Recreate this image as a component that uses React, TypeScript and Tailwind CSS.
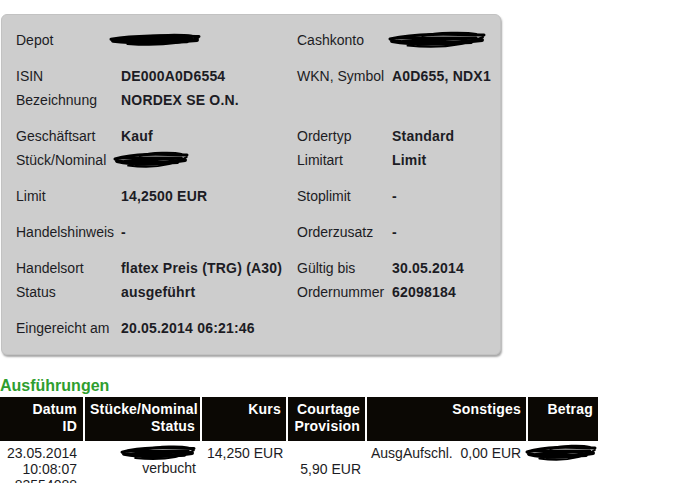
import type { ReactNode } from "react";

function Scribble({ w, h, className = "" }: { w: number; h: number; className?: string }) {
  return (
    <svg width={w} height={h} viewBox={`0 0 ${w} ${h}`} className={className}>
      <g fill="none" stroke="#000" strokeLinecap="round" strokeLinejoin="round">
        <path d={`M2 ${h * 0.45} C ${w * 0.3} ${h * 0.15}, ${w * 0.6} ${h * 0.2}, ${w - 2} ${h * 0.25}`} strokeWidth="3" />
        <path d={`M4 ${h * 0.55} C ${w * 0.35} ${h * 0.8}, ${w * 0.7} ${h * 0.65}, ${w - 4} ${h * 0.5}`} strokeWidth="4" />
        <path d={`M${w * 0.1} ${h * 0.4} L ${w * 0.9} ${h * 0.4} L ${w * 0.15} ${h * 0.58} L ${w * 0.85} ${h * 0.62} L ${w * 0.3} ${h * 0.72}`} strokeWidth="3" />
        <path d={`M${w * 0.2} ${h * 0.78} C ${w * 0.45} ${h * 0.9}, ${w * 0.75} ${h * 0.85}, ${w * 0.97} ${h * 0.35}`} strokeWidth="2" />
        <path d={`M${w * 0.35} ${h * 0.3} C ${w * 0.5} ${h * 0.1}, ${w * 0.8} ${h * 0.1}, ${w * 0.9} ${h * 0.2}`} strokeWidth="2" />
      </g>
    </svg>
  );
}

function Row({ label, value, label2, value2 }: { label: string; value: ReactNode; label2?: string; value2?: ReactNode }) {
  return (
    <div className="grid h-6 grid-cols-[105px_176px_95px_1fr] items-center">
      <span>{label}</span>
      <span className="font-bold tracking-[0.2px]">{value}</span>
      <span>{label2}</span>
      <span className="font-bold tracking-[0.2px]">{value2}</span>
    </div>
  );
}

const cols = "grid grid-cols-[83px_115px_84px_77px_159px_70px] gap-x-[2px]";

export default function App() {
  return (
    <div className="h-[483px] w-[674px] overflow-hidden bg-white text-[14px] text-[#1c1c24]" style={{ fontFamily: '"Liberation Sans", Arial, sans-serif' }}>
      <div className="ml-px mt-[14px] flex w-[500px] flex-col gap-3 rounded-md border border-[#c2c2c2] bg-[#cdcdcd] pt-[13px] pb-[14px] pl-[14px] shadow-[1px_2px_2px_rgba(0,0,0,0.35)]">
        <div>
          <Row
            label="Depot"
            value={<Scribble w={92} h={14} className="-ml-3" />}
            label2="Cashkonto"
            value2={<Scribble w={98} h={20} className="-ml-1" />}
          />
        </div>
        <div>
          <Row label="ISIN" value="DE000A0D6554" label2="WKN, Symbol" value2="A0D655, NDX1" />
          <Row label="Bezeichnung" value="NORDEX SE O.N." />
        </div>
        <div>
          <Row label="Geschäftsart" value="Kauf" label2="Ordertyp" value2="Standard" />
          <Row label="Stück/Nominal" value={<Scribble w={76} h={20} className="-ml-2" />} label2="Limitart" value2="Limit" />
        </div>
        <div>
          <Row label="Limit" value="14,2500 EUR" label2="Stoplimit" value2="-" />
        </div>
        <div>
          <Row label="Handelshinweis" value="-" label2="Orderzusatz" value2="-" />
        </div>
        <div>
          <Row label="Handelsort" value="flatex Preis (TRG) (A30)" label2="Gültig bis" value2="30.05.2014" />
          <Row label="Status" value="ausgeführt" label2="Ordernummer" value2="62098184" />
        </div>
        <div>
          <Row label="Eingereicht am" value="20.05.2014 06:21:46" />
        </div>
      </div>

      <h2 className="mt-[22px] text-[16px] leading-[18px] font-bold text-[#2f9e2f]">Ausführungen</h2>

      <div className="mt-[2px] w-[598px]">
        <div className={`${cols} h-11 bg-white text-right font-bold leading-[17px] tracking-[0.2px] text-white`}>
          <div className="bg-[#0b0804] px-[6px] pt-[4px]">Datum<br />ID</div>
          <div className="bg-[#0b0804] px-[5px] pt-[4px]">Stücke/Nominal<br />Status</div>
          <div className="bg-[#0b0804] px-[5px] pt-[4px]">Kurs</div>
          <div className="bg-[#0b0804] px-[5px] pt-[4px]">Courtage<br />Provision</div>
          <div className="bg-[#0b0804] px-[5px] pt-[4px]">Sonstiges</div>
          <div className="bg-[#0b0804] px-[5px] pt-[4px]">Betrag</div>
        </div>
        <div className={`${cols} pt-[4px] leading-[16px]`}>
          <div className="pr-[6px] text-right">23.05.2014<br />10:08:07<br />83554088</div>
          <div className="flex flex-col items-end pr-[4px]">
            <Scribble w={76} h={18} className="-mt-[1px]" />
            <span className="-mt-[2px]">verbucht</span>
          </div>
          <div className="pl-[5px]">14,250 EUR</div>
          <div className="pr-[4px] text-right"><br />5,90 EUR</div>
          <div className="pl-[4px] whitespace-pre">AusgAufschl.  0,00 EUR</div>
          <div className="-ml-[3px]"><Scribble w={72} h={20} className="-mt-[2px]" /></div>
        </div>
      </div>
    </div>
  );
}
